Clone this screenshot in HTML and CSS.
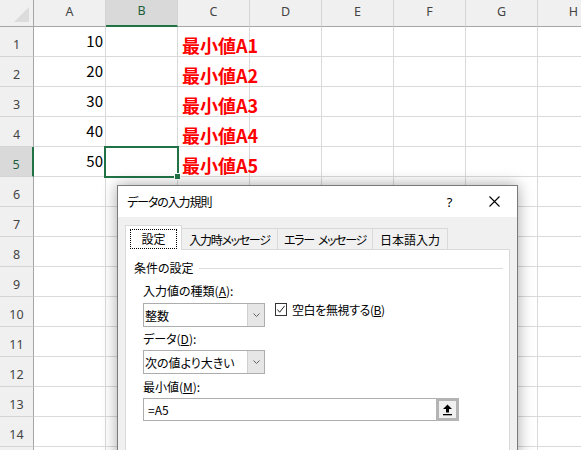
FILE: index.html
```html
<!DOCTYPE html>
<html lang="ja">
<head>
<meta charset="utf-8">
<title>データの入力規則</title>
<link rel="stylesheet" href="styles.css">
</head>
<body>
<div class="sheet">
  <div class="grid">
    <div class="corner"><svg class="tri" width="16" height="16" viewBox="0 0 16 16"><polygon points="0,15 15,0 15,15" fill="#dcdcdc"/></svg></div>
    <div class="colh">A</div>
    <div class="colh sel">B</div>
    <div class="colh">C</div>
    <div class="colh">D</div>
    <div class="colh">E</div>
    <div class="colh">F</div>
    <div class="colh">G</div>
    <div class="colh">H</div>

    <div class="rowh">1</div>
    <div class="cell num">10</div><div class="cell"></div><div class="cell red">最小値A1</div>
    <div class="cell"></div><div class="cell"></div><div class="cell"></div><div class="cell"></div><div class="cell"></div>

    <div class="rowh">2</div>
    <div class="cell num">20</div><div class="cell"></div><div class="cell red">最小値A2</div>
    <div class="cell"></div><div class="cell"></div><div class="cell"></div><div class="cell"></div><div class="cell"></div>

    <div class="rowh">3</div>
    <div class="cell num">30</div><div class="cell"></div><div class="cell red">最小値A3</div>
    <div class="cell"></div><div class="cell"></div><div class="cell"></div><div class="cell"></div><div class="cell"></div>

    <div class="rowh">4</div>
    <div class="cell num">40</div><div class="cell"></div><div class="cell red">最小値A4</div>
    <div class="cell"></div><div class="cell"></div><div class="cell"></div><div class="cell"></div><div class="cell"></div>

    <div class="rowh sel">5</div>
    <div class="cell num">50</div><div class="cell active"><span class="cursor"></span><span class="handle"></span></div><div class="cell red">最小値A5</div>
    <div class="cell"></div><div class="cell"></div><div class="cell"></div><div class="cell"></div><div class="cell"></div>

    <div class="rowh">6</div>
    <div class="cell"></div><div class="cell"></div><div class="cell"></div><div class="cell"></div><div class="cell"></div><div class="cell"></div><div class="cell"></div><div class="cell"></div>
    <div class="rowh">7</div>
    <div class="cell"></div><div class="cell"></div><div class="cell"></div><div class="cell"></div><div class="cell"></div><div class="cell"></div><div class="cell"></div><div class="cell"></div>
    <div class="rowh">8</div>
    <div class="cell"></div><div class="cell"></div><div class="cell"></div><div class="cell"></div><div class="cell"></div><div class="cell"></div><div class="cell"></div><div class="cell"></div>
    <div class="rowh">9</div>
    <div class="cell"></div><div class="cell"></div><div class="cell"></div><div class="cell"></div><div class="cell"></div><div class="cell"></div><div class="cell"></div><div class="cell"></div>
    <div class="rowh">10</div>
    <div class="cell"></div><div class="cell"></div><div class="cell"></div><div class="cell"></div><div class="cell"></div><div class="cell"></div><div class="cell"></div><div class="cell"></div>
    <div class="rowh">11</div>
    <div class="cell"></div><div class="cell"></div><div class="cell"></div><div class="cell"></div><div class="cell"></div><div class="cell"></div><div class="cell"></div><div class="cell"></div>
    <div class="rowh">12</div>
    <div class="cell"></div><div class="cell"></div><div class="cell"></div><div class="cell"></div><div class="cell"></div><div class="cell"></div><div class="cell"></div><div class="cell"></div>
    <div class="rowh">13</div>
    <div class="cell"></div><div class="cell"></div><div class="cell"></div><div class="cell"></div><div class="cell"></div><div class="cell"></div><div class="cell"></div><div class="cell"></div>
    <div class="rowh">14</div>
    <div class="cell"></div><div class="cell"></div><div class="cell"></div><div class="cell"></div><div class="cell"></div><div class="cell"></div><div class="cell"></div><div class="cell"></div>
    <div class="rowh"></div>
    <div class="cell"></div><div class="cell"></div><div class="cell"></div><div class="cell"></div><div class="cell"></div><div class="cell"></div><div class="cell"></div><div class="cell"></div>
  </div>

  <div class="dialog">
    <div class="titlebar">
      <div class="title">データの入力規則</div>
      <div class="tbtn help">?</div>
      <div class="tbtn close"><svg width="11" height="11" viewBox="0 0 11 11"><path d="M0.5 0.5 L10.5 10.5 M10.5 0.5 L0.5 10.5" stroke="#000" stroke-width="1.1" fill="none"/></svg></div>
    </div>
    <div class="dbody">
      <div class="tabs">
        <div class="tab active w1"><span class="focus">設定</span></div>
        <div class="tab w2 kana">入力時メッセージ</div>
        <div class="tab w3 kana"><span class="word">エラー</span> <span>メッセージ</span></div>
        <div class="tab w4">日本語入力</div>
      </div>
      <div class="panel">
        <div class="group">条件の設定</div>
        <div class="fields">
          <div class="label l1">入力値の種類(<u>A</u>):</div>
          <div class="row r1">
            <div class="select">
              <div class="val">整数</div>
              <div class="btn"><svg width="7" height="4" viewBox="0 0 7 4"><polyline points="0.5,0.5 3.5,3.5 6.5,0.5" fill="none" stroke="#606060" stroke-width="1"/></svg></div>
            </div>
            <div class="check"><svg width="11" height="11" viewBox="0 0 11 11"><polyline points="1.5,5.5 4,8.5 9.5,1.5" fill="none" stroke="#222" stroke-width="1.1"/></svg></div>
            <div class="checklabel">空白を無視する(<u>B</u>)</div>
          </div>
          <div class="label l2">データ(<u>D</u>):</div>
          <div class="select s2">
            <div class="val">次の値より大きい</div>
            <div class="btn"><svg width="7" height="4" viewBox="0 0 7 4"><polyline points="0.5,0.5 3.5,3.5 6.5,0.5" fill="none" stroke="#606060" stroke-width="1"/></svg></div>
          </div>
          <div class="label l3">最小値(<u>M</u>):</div>
          <div class="refinput">
            <div class="val">=A5</div>
            <div class="refbtn"><svg width="11" height="12" viewBox="0 0 11 12"><polygon points="5.5,0.5 10,5 7,5 7,8.5 4,8.5 4,5 1,5" fill="#000"/><rect x="1" y="10" width="9" height="1.3" fill="#000"/></svg></div>
          </div>
        </div>
      </div>
    </div>
  </div>
</div>
</body>
</html>
```

FILE: styles.css
```css
html, body {
  margin: 0;
  padding: 0;
  overflow: hidden;
  background: #fff;
}

body {
  width: 581px;
  height: 450px;
  font-family: "Noto Sans", "Noto Sans CJK JP", sans-serif;
}

.sheet {
  position: relative;
  width: 581px;
  height: 450px;
  overflow: hidden;
}

/* ---------- spreadsheet grid ---------- */
.grid {
  display: grid;
  grid-template-columns: 34px repeat(8, 72px);
  grid-template-rows: 27px;
  grid-auto-rows: 30px;
  width: 610px;
}

.grid > div {
  box-sizing: border-box;
}

.corner {
  background: #f0f0f0;
  border-right: 1px solid #a6a6a6;
  border-bottom: 1px solid #a6a6a6;
  display: flex;
  align-items: flex-end;
  justify-content: flex-end;
  padding: 0 3px 3px 0;
}

.tri {
  display: block;
}

.colh {
  background: #f0f0f0;
  border-right: 1px solid #d4d4d4;
  border-bottom: 1px solid #a6a6a6;
  display: flex;
  align-items: center;
  justify-content: center;
  font-size: 12.5px;
  color: #444;
  padding-bottom: 4px;
}

.colh.sel {
  background: #d9d9d9;
  border-bottom: 2px solid #217346;
  color: #1f5e3a;
}

.rowh {
  background: #f0f0f0;
  border-right: 1px solid #a6a6a6;
  border-bottom: 1px solid #d4d4d4;
  display: flex;
  align-items: center;
  justify-content: center;
  font-size: 12.5px;
  color: #444;
  padding-top: 5px;
}

.rowh.sel {
  background: #d9d9d9;
  border-right: 2px solid #217346;
  color: #1f5e3a;
}

.cell {
  border-right: 1px solid #dadada;
  border-bottom: 1px solid #dadada;
}

.num {
  display: flex;
  align-items: flex-end;
  justify-content: flex-end;
  padding: 0 2px 8px 0;
  font-family: "Noto Sans CJK JP", sans-serif;
  font-size: 15px;
  line-height: 15px;
  color: #000;
}

.red {
  display: flex;
  align-items: flex-end;
  padding: 0 0 2px 4px;
  font-family: "Noto Sans CJK JP", sans-serif;
  font-weight: bold;
  font-size: 18px;
  line-height: 18px;
  color: #ff0000;
  white-space: nowrap;
}

.active {
  position: relative;
}

.cursor {
  position: absolute;
  left: -2px;
  top: -1px;
  right: -2px;
  bottom: -2px;
  border: 2px solid #217346;
}

.handle {
  position: absolute;
  right: -4px;
  bottom: -4px;
  width: 5px;
  height: 5px;
  background: #217346;
  border: 1px solid #fff;
}

/* ---------- dialog ---------- */
.dialog {
  position: absolute;
  left: 117px;
  top: 185px;
  width: 401px;
  height: 300px;
  box-sizing: border-box;
  border: 1px solid #7a7a7a;
  background: #f0f0f0;
  box-shadow: 0 0 14px rgba(0, 0, 0, 0.35);
  font-family: "Noto Sans CJK JP", sans-serif;
  font-size: 12px;
  font-feature-settings: "palt";
  color: #000;
}

.titlebar {
  height: 31px;
  background: #fff;
  display: flex;
  align-items: center;
  padding-left: 9px;
}

.title {
  flex: 1;
  letter-spacing: -1.1px;
}

.tbtn {
  width: 46px;
  height: 31px;
  display: flex;
  align-items: center;
  justify-content: center;
}

.help {
  font-family: "Noto Sans", sans-serif;
  font-size: 13px;
  padding-left: 3px;
  box-sizing: border-box;
}

.dbody {
  padding: 8px 7px 0 7px;
}

.tabs {
  display: flex;
  align-items: flex-end;
  height: 24px;
  position: relative;
  z-index: 1;
}

.tab {
  height: 21px;
  box-sizing: border-box;
  border: 1px solid #d9d9d9;
  border-bottom: none;
  background: #f0f0f0;
  display: flex;
  align-items: center;
  justify-content: center;
  margin-left: -1px;
  white-space: nowrap;
}

.tab.kana {
  letter-spacing: -1.3px;
}

.tab .word {
  margin-right: 4px;
}

.tab.active {
  height: 25px;
  margin-bottom: -1px;
  margin-left: 0;
  background: #fff;
  align-items: flex-start;
  padding-top: 3px;
}

.w1 { width: 57px; }
.w2 { width: 97px; }
.w3 { width: 96px; }
.w4 { width: 76px; }

.focus {
  display: block;
  width: 47px;
  height: 20px;
  box-sizing: border-box;
  border: 1px dotted #000;
  text-align: center;
  line-height: 18px;
}

.panel {
  background: #fff;
  border: 1px solid #d9d9d9;
  height: 240px;
  box-sizing: border-box;
  padding: 0 8px;
}

.group {
  display: flex;
  align-items: center;
  height: 16px;
  margin-top: 10px;
  line-height: 16px;
}

.group::after {
  content: "";
  flex: 1;
  height: 1px;
  background: #dcdcdc;
  margin-left: 5px;
  margin-right: -2px;
}

.fields {
  margin-left: 9px;
  display: flex;
  flex-direction: column;
  align-items: flex-start;
}

.label {
  height: 16px;
  line-height: 16px;
}

.l1 { margin-top: 7px; }
.l2 { margin-top: 4px; }
.l3 { margin-top: 5px; }

.row {
  display: flex;
  align-items: flex-start;
  margin-top: 4px;
}

.select {
  display: flex;
  width: 122px;
  height: 24px;
  box-sizing: border-box;
  border: 1px solid #adadad;
  background: #fff;
}

.s2 {
  margin-top: 3px;
}

.select .val {
  flex: 1;
  display: flex;
  align-items: center;
  padding-left: 1px;
}

.select .btn {
  width: 16px;
  background: #e6e6e6;
  border-left: 1px solid #d0d0d0;
  display: flex;
  align-items: center;
  justify-content: center;
}

.check {
  width: 12px;
  height: 13px;
  box-sizing: border-box;
  border: 1px solid #333;
  background: #fff;
  margin-left: 10px;
  display: flex;
  align-items: center;
  justify-content: center;
}

.checklabel {
  margin-left: 5px;
  margin-top: -1px;
  line-height: 16px;
  letter-spacing: -0.4px;
}

.refinput {
  display: flex;
  width: 316px;
  height: 23px;
  box-sizing: border-box;
  border: 1px solid #adadad;
  background: #fff;
  margin-top: 3px;
}

.refinput .val {
  flex: 1;
  display: flex;
  align-items: center;
  padding-left: 4px;
}

.refbtn {
  width: 23px;
  height: 23px;
  box-sizing: border-box;
  border: 3px solid #b4b4b4;
  background: #f0f0f0;
  margin: -1px -1px -1px 0;
  display: flex;
  align-items: center;
  justify-content: center;
}
```
